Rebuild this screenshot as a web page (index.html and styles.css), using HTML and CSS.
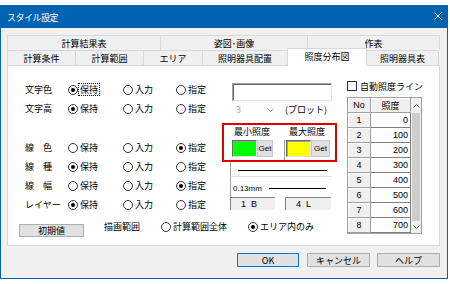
FILE: index.html
```html
<!DOCTYPE html>
<html lang="ja">
<head>
<meta charset="utf-8">
<title>スタイル設定</title>
<link rel="stylesheet" href="styles.css">
</head>
<body>
<div class="window">
  <div class="titlebar">
    <span class="title">スタイル設定</span>
    <svg class="close" width="8" height="8" viewBox="0 0 8 8"><path d="M0.5 0.5L7.5 7.5M7.5 0.5L0.5 7.5" stroke="#fff" stroke-width="1"/></svg>
  </div>
  <div class="client">
    <div class="tabs">
      <div class="tabrow">
        <div class="tab w153">計算結果表</div>
        <div class="tab w147">姿図･画像</div>
        <div class="tab w133 last">作表</div>
      </div>
      <div class="tabrow">
        <div class="tab w68">計算条件</div>
        <div class="tab w68">計算範囲</div>
        <div class="tab w59">エリア</div>
        <div class="tab w85">照明器具配置</div>
        <div class="tab w80 sel">照度分布図</div>
        <div class="tab w73 last">照明器具表</div>
      </div>
    </div>
    <div class="panel">
      <div class="main">
        <div class="upper">
          <div class="leftgrid">
            <div class="lbl">文字色</div>
            <div class="opt"><span class="rb on"></span><span class="focus">保持</span></div>
            <div class="opt"><span class="rb"></span><span>入力</span></div>
            <div class="opt"><span class="rb"></span><span>指定</span></div>

            <div class="lbl">文字高</div>
            <div class="opt"><span class="rb on"></span><span>保持</span></div>
            <div class="opt"><span class="rb"></span><span>入力</span></div>
            <div class="opt"><span class="rb"></span><span>指定</span></div>

            <div class="lbl"></div><div></div><div></div><div></div>

            <div class="lbl">線　色</div>
            <div class="opt"><span class="rb"></span><span>保持</span></div>
            <div class="opt"><span class="rb"></span><span>入力</span></div>
            <div class="opt"><span class="rb on"></span><span>指定</span></div>

            <div class="lbl">線　種</div>
            <div class="opt"><span class="rb on"></span><span>保持</span></div>
            <div class="opt"><span class="rb"></span><span>入力</span></div>
            <div class="opt"><span class="rb"></span><span>指定</span></div>

            <div class="lbl">線　幅</div>
            <div class="opt"><span class="rb"></span><span>保持</span></div>
            <div class="opt"><span class="rb"></span><span>入力</span></div>
            <div class="opt"><span class="rb on"></span><span>指定</span></div>

            <div class="lbl">レイヤー</div>
            <div class="opt"><span class="rb on"></span><span>保持</span></div>
            <div class="opt"><span class="rb"></span><span>入力</span></div>
            <div class="opt"><span class="rb"></span><span>指定</span></div>
          </div>
          <div class="mid">
            <div class="textbox"></div>
            <div class="comborow">
              <div class="combo"><span class="cval">3</span><svg width="7" height="4" viewBox="0 0 7 4"><path d="M0.5 0.5L3.5 3.5L6.5 0.5" fill="none" stroke="#a8a8a8" stroke-width="1"/></svg></div>
              <span class="plot">(プロット)</span>
            </div>
            <div class="redbox">
              <div class="rlabels">
                <span class="rl1">最小照度</span>
                <span class="rl2">最大照度</span>
              </div>
              <div class="swrow">
                <div class="swcell c1"><span class="sw green"></span><span class="get">Get</span></div>
                <div class="swcell c2"><span class="sw yellow"></span><span class="get g2">Get</span></div>
              </div>
            </div>
            <div class="linebox"><div class="sampleline"></div></div>
            <div class="widthbox"><span>0.13mm</span><div class="wline"></div></div>
            <div class="layerrow">
              <div class="lbox">1&nbsp;&nbsp;B</div>
              <div class="lbox l2">4&nbsp;&nbsp;L</div>
            </div>
          </div>
        </div>
        <div class="bottomrow">
          <div class="initbtn">初期値</div>
          <span class="drawlbl">描画範囲</span>
          <div class="opt b1"><span class="rb"></span><span>計算範囲全体</span></div>
          <div class="opt b2"><span class="rb on"></span><span>エリア内のみ</span></div>
        </div>
      </div>
      <div class="right">
        <div class="check"><span class="cb"></span><span>自動照度ライン</span></div>
        <div class="table">
          <div class="cols">
            <div class="hc">No</div><div class="hc">照度</div>
            <div class="nc">1</div><div class="vc">0</div>
            <div class="nc">2</div><div class="vc">100</div>
            <div class="nc">3</div><div class="vc">200</div>
            <div class="nc">4</div><div class="vc">300</div>
            <div class="nc">5</div><div class="vc">400</div>
            <div class="nc">6</div><div class="vc">500</div>
            <div class="nc">7</div><div class="vc">600</div>
            <div class="nc">8</div><div class="vc">700</div>
          </div>
          <div class="scroll">
            <div class="arrow up"><svg width="7" height="4" viewBox="0 0 7 4"><path d="M0.5 3.5L3.5 0.5L6.5 3.5" fill="none" stroke="#606060" stroke-width="1"/></svg></div>
            <div class="thumb"></div>
            <div class="arrow down"><svg width="7" height="4" viewBox="0 0 7 4"><path d="M0.5 0.5L3.5 3.5L6.5 0.5" fill="none" stroke="#606060" stroke-width="1"/></svg></div>
          </div>
        </div>
      </div>
    </div>
    <div class="buttons">
      <div class="btn ok">OK</div>
      <div class="btn">キャンセル</div>
      <div class="btn">ヘルプ</div>
    </div>
  </div>
</div>
</body>
</html>
```

FILE: styles.css
```css
* { box-sizing: border-box; }
html, body { margin: 0; padding: 0; background: #fff; }
body {
  font-family: "Noto Sans CJK JP", "Noto Sans", sans-serif;
  font-size: 9px;
  line-height: 11px;
  color: #000;
}
.window {
  margin-top: 5px;
  width: 448px;
  height: 274px;
  border: 1px solid #0063b1;
  border-top: none;
  background: #f0f0f0;
  display: flex;
  flex-direction: column;
}
.titlebar {
  height: 23px;
  flex: none;
  background: #0063b1;
  color: #fff;
  display: flex;
  align-items: center;
  justify-content: space-between;
  padding: 0 5px 0 6px;
}
.title { font-size: 9px; letter-spacing: -0.5px; margin-top: 1px; }
.close { margin-top: -1px; }
.client { padding: 7px 0 0 6px; }
.tabs { width: 433px; }
.tabrow { display: flex; height: 15px; }
.tab {
  height: 15px;
  border-top: 1px solid #d9d9d9;
  border-left: 1px solid #d9d9d9;
  background: #f0f0f0;
  display: flex;
  align-items: center;
  justify-content: center;
  flex: none;
}
.tab.last { border-right: 1px solid #d9d9d9; }
.w153 { width: 153px; }
.w147 { width: 147px; }
.w133 { width: 133px; }
.w68 { width: 68px; }
.w59 { width: 59px; }
.w85 { width: 85px; }
.w80 { width: 80px; }
.w73 { width: 73px; }
.tab.sel {
  position: relative;
  z-index: 1;
  margin-top: -2px;
  height: 18px;
  background: #fff;
  border-right: 1px solid #d9d9d9;
  margin-right: -1px;
  align-items: flex-start;
  padding-top: 2px;
}
.panel {
  width: 433px;
  height: 181px;
  border: 1px solid #d9d9d9;
  background: #fff;
  display: flex;
}
.main { width: 332px; display: flex; flex-direction: column; }
.upper { display: flex; height: 148px; }
.leftgrid {
  margin: 14px 0 0 17px;
  width: 197px;
  display: grid;
  grid-template-columns: 42px 55px 53px 47px;
  grid-template-rows: 19px 19px 20px 19px 19px 19px 19px;
  align-items: center;
}
.lbl { white-space: nowrap; }
.opt { display: flex; align-items: center; gap: 2px; white-space: nowrap; }
.rb {
  width: 10px; height: 10px;
  margin-left: 1px;
  border: 1px solid #333;
  border-radius: 50%;
  background: #fff;
  display: flex; align-items: center; justify-content: center;
  flex: none;
}
.rb.on::after {
  content: "";
  width: 4px; height: 4px;
  border-radius: 50%;
  background: #000;
}
.focus { outline: 1px dotted #000; outline-offset: 0; padding: 0 1px; margin-left: -1px; }
.mid { width: 118px; display: flex; flex-direction: column; }
.textbox {
  margin: 17px 0 0 10px;
  width: 100px; height: 18px;
  background: #fff;
  border-top: 1px solid #a0a0a0;
  border-left: 1px solid #a0a0a0;
  border-right: 1px solid #e3e3e3;
  border-bottom: 1px solid #e3e3e3;
  box-shadow: inset 1px 1px 0 #696969;
}
.comborow { margin-top: 2px; height: 13px; display: flex; align-items: center; }
.combo {
  margin-left: 10px; width: 48px; height: 13px;
  display: flex; align-items: center; justify-content: space-between;
  padding: 0 6px 0 4px;
  color: #a8a8a8;
}
.plot { margin-left: 5px; white-space: nowrap; }
.redbox {
  margin-top: 7px;
  width: 115px; height: 39px;
  border: 2px solid #e00000;
  display: flex; flex-direction: column;
}
.rlabels { height: 13px; display: flex; align-items: center; white-space: nowrap; }
.rl1 { margin-left: 10px; }
.rl2 { margin-left: 19px; }
.swrow { margin-top: 2px; height: 20px; display: flex; }
.swcell { display: flex; align-items: flex-start; height: 20px; }
.swcell.c1 { width: 60px; padding-left: 8px; }
.swcell.c2 { width: 51px; padding-left: 1px; border-left: 1px solid #a0a0a0; }
.sw {
  width: 25px; height: 17px;
  border-top: 1px solid #696969;
  border-left: 1px solid #696969;
  border-right: 1px solid #e3e3e3;
  border-bottom: 1px solid #e3e3e3;
  box-shadow: inset 1px 1px 0 #a0a0a0;
}
.green { background: #00ff00; }
.yellow { background: #ffff00; }
.get {
  width: 16px; height: 17px;
  background: #e1e1e1;
  border: 1px solid #c8c8c8;
  display: flex; align-items: center; justify-content: center;
  font-family: "Liberation Sans", Arial, sans-serif;
  font-size: 8px;
}
.get.g2 { width: 19px; }
.linebox {
  margin-left: 8px; width: 102px; height: 15px;
  border-left: 1px solid #a0a0a0;
  border-bottom: 1px solid #e3e3e3;
  padding: 8px 0 0 7px;
}
.sampleline { width: 89px; height: 1px; background: #000; }
.widthbox {
  margin-left: 8px; width: 102px; height: 20px;
  border-left: 1px solid #a0a0a0;
  display: flex; align-items: center;
  padding: 3px 0 0 2px;
  font-family: "Liberation Sans", Arial, sans-serif;
  font-size: 8px;
}
.wline { margin-left: 7px; width: 57px; height: 1px; background: #000; }
.layerrow { margin-left: 8px; display: flex; gap: 10px; height: 13px; }
.lbox {
  width: 45px; height: 13px;
  background: #f0f0f0;
  border-top: 1px solid #808080;
  border-left: 1px solid #808080;
  padding-left: 10px;
  display: flex; align-items: center;
  font-family: "Liberation Sans", Arial, sans-serif;
  font-size: 9px;
}
.lbox.l2 { width: 46px; }
.bottomrow { margin-top: 7px; display: flex; align-items: flex-start; height: 16px; }
.initbtn {
  margin: 3px 0 0 11px;
  width: 65px; height: 13px;
  background: #e1e1e1;
  border: 1px solid #adadad;
  display: flex; align-items: center; justify-content: center;
}
.drawlbl { margin-left: 20px; white-space: nowrap; }
.opt.b1 { margin-left: 20px; }
.opt.b2 { margin-left: 20px; }
.right { width: 99px; padding-left: 7px; }
.check { margin-top: 15px; height: 10px; display: flex; align-items: center; gap: 3px; white-space: nowrap; }
.cb { width: 10px; height: 10px; border: 1px solid #333; background: #fff; flex: none; }
.table {
  margin-top: 6px;
  width: 75px; height: 137px;
  border: 1px solid #a0a0a0;
  display: flex;
}
.cols {
  width: 63px;
  display: grid;
  grid-template-columns: 23px 40px;
  grid-template-rows: repeat(9, 15px);
}
.hc, .nc {
  background: #f0f0f0;
  border-right: 1px solid #a0a0a0;
  border-bottom: 1px solid #a0a0a0;
  box-shadow: inset 1px 1px 0 #fff;
  display: flex; align-items: center; justify-content: center;
  font-family: "Liberation Sans", Arial, sans-serif;
}
.hc:nth-child(2) { font-family: "Noto Sans CJK JP", sans-serif; }
.vc {
  background: #fff;
  border-right: 1px solid #808080;
  border-bottom: 1px solid #808080;
  display: flex; align-items: center; justify-content: flex-end;
  padding-right: 2px;
  font-family: "Liberation Sans", Arial, sans-serif;
}
.scroll { width: 10px; background: #f0f0f0; display: flex; flex-direction: column; }
.arrow { height: 15px; display: flex; align-items: center; justify-content: center; flex: none; }
.arrow.down { height: 12px; }
.thumb { flex: 1; background: #cdcdcd; margin: 0 1px; }
.buttons { display: flex; margin: 7px 0 0 230px; }
.btn {
  width: 64px; height: 14px;
  margin-right: 7px;
  background: #e1e1e1;
  border: 1px solid #adadad;
  display: flex; align-items: center; justify-content: center;
  white-space: nowrap;
}
.btn.ok { width: 63px; margin-right: 8px; border-color: #0078d7; }
```
